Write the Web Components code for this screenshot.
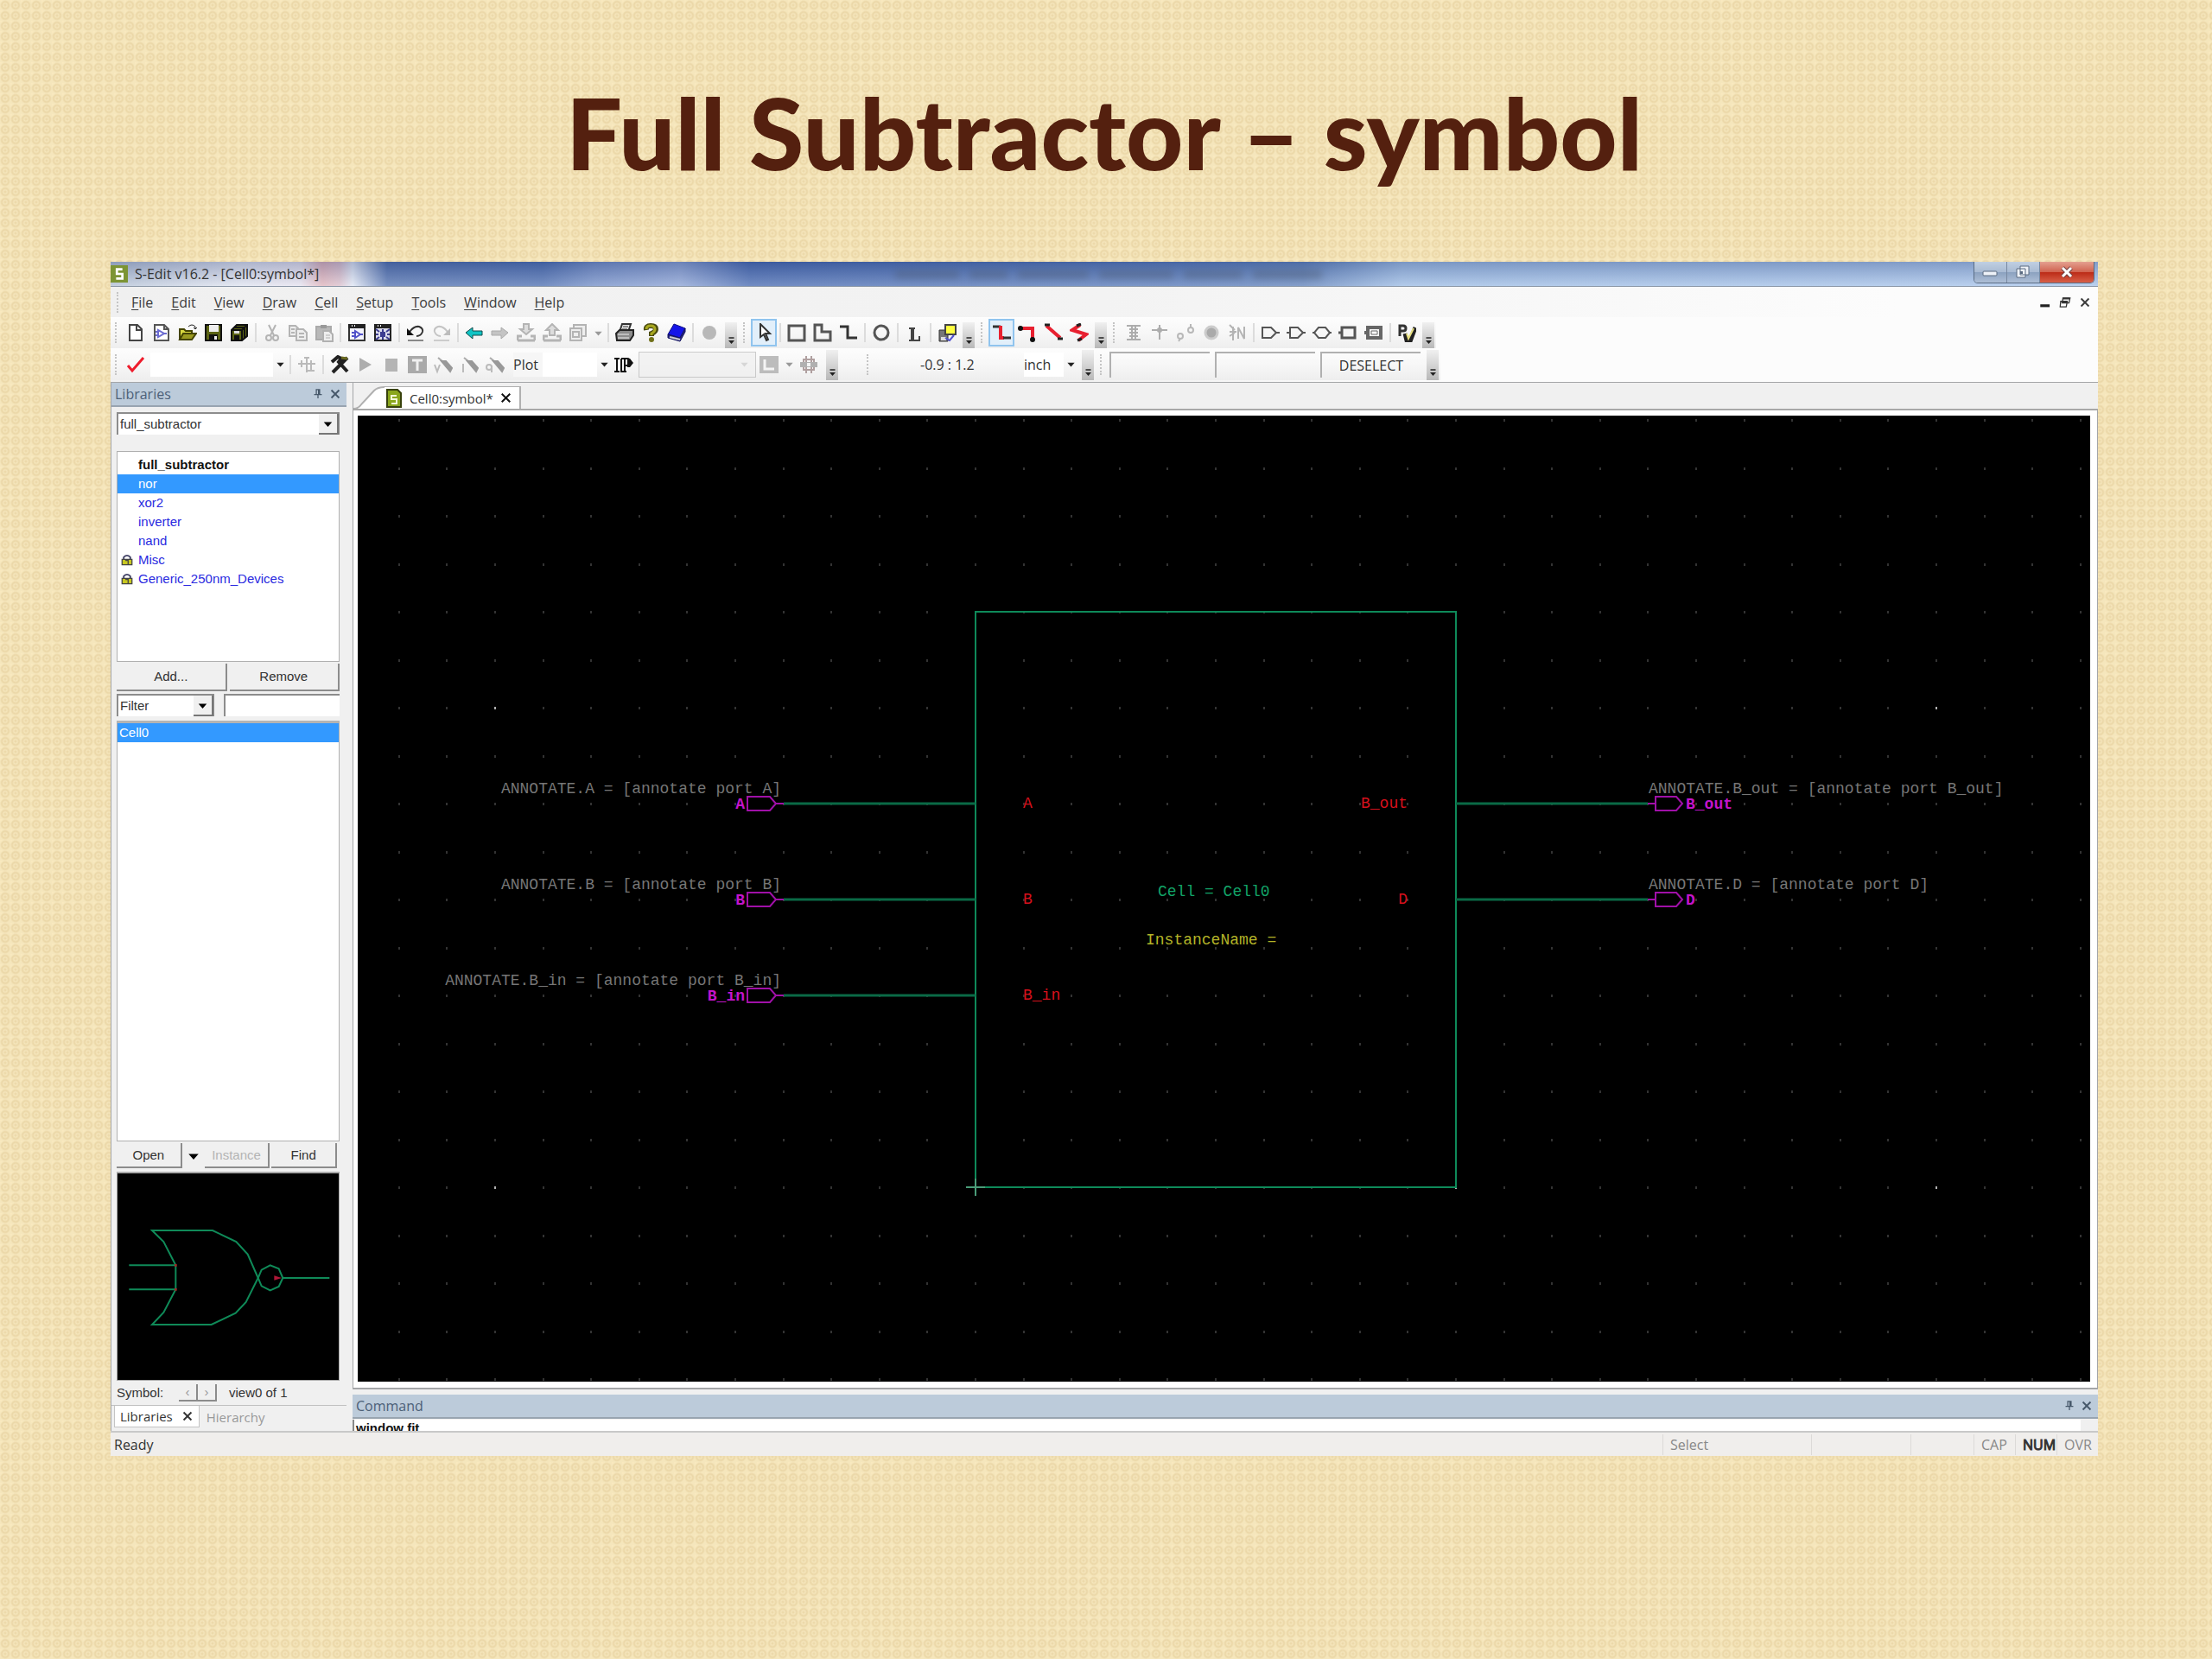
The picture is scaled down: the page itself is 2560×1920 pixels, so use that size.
<!DOCTYPE html>
<html lang="en">
<head>
<meta charset="utf-8">
<title>Full Subtractor – symbol</title>
<style>
  html { background: #f2e3b6; }
  body { margin: 0; font-family: "Open Sans", "Noto Sans", sans-serif; }
</style>
</head>
<body>
<slide-page>
  <span slot="title">Full Subtractor – symbol</span>
  <app-window></app-window>
</slide-page>

<script>
function define(tag, css, html, setup) {
  const template = document.createElement('template');
  template.innerHTML = `<style>*{box-sizing:border-box}${css}</style>${html}`;
  customElements.define(tag, class extends HTMLElement {
    constructor() {
      super();
      this.attachShadow({ mode: 'open' }).append(template.content.cloneNode(true));
    }
    connectedCallback() { if (setup) setup(this, this.shadowRoot); }
  });
}

const ICONS = {
  new: '<path d="M4 2h9l5 5v13H4z" fill="#fff" stroke="#444" stroke-width="2"/><path d="M12 2v6h6" fill="none" stroke="#444" stroke-width="2"/>',
  newcell: '<path d="M3 2h11l5 5v13H3z" fill="#fff" stroke="#555" stroke-width="2"/><path d="M14 2v5h5" fill="none" stroke="#555" stroke-width="2"/><path d="M7 8v8l7-4zM4 10h3M4 14h3M14 12h3" fill="none" stroke="#6a6ad0" stroke-width="2"/>',
  open: '<path d="M2 19V7h5l2 2h7v3" fill="#d8d840" stroke="#444400" stroke-width="2"/><path d="M2 19l4-7h15l-5 7z" fill="#9a9a20" stroke="#444400" stroke-width="2"/><path d="M12 4q4-4 8 0v3M18 5l2 2 2-2" fill="none" stroke="#222"/>',
  save: '<path d="M2 2h18v18H2z" fill="#5c6414" stroke="#111" stroke-width="2"/><path d="M6 2h11v8H6z" fill="#eee"/><path d="M6 13h10v7H6z" fill="#111"/><path d="M12 15h3v4h-3z" fill="#eee"/>',
  saveall: '<path d="M8 2h12v13l-6 5H2V8z" fill="#5c6414" stroke="#111" stroke-width="2"/><path d="M2 8h12v12M14 8l6-6M5 5h12v12" stroke="#111" stroke-width="2" fill="none"/><path d="M5 14h6v5H5z" fill="#111"/><path d="M5 9h6v3H5z" fill="#ddd"/>',
  cut: '<g fill="none" stroke="#b4b4b4" stroke-width="2"><path d="M7 2l6 12M15 2L9 14"/><circle cx="7" cy="17" r="3"/><circle cx="15" cy="17" r="3"/></g>',
  copy: '<g fill="#eee" stroke="#b4b4b4" stroke-width="2"><path d="M1 3h7l3 3v9H1z"/><path d="M9 7h8l4 4v9H9z"/><path d="M12 12h6M12 16h6M3 7h4M3 11h4"/></g>',
  paste: '<path d="M2 4h17v15H2z" fill="#b8b8b8" stroke="#aaa" stroke-width="2"/><path d="M7 2h7v4H7z" fill="#999"/><path d="M10 9h7l4 4v8H10z" fill="#eee" stroke="#b0b0b0" stroke-width="2"/><path d="M13 14h5M13 17h5" stroke="#b0b0b0"/>',
  view1: '<path d="M2 2h18v18H2z" fill="#f4f4fc" stroke="#333" stroke-width="2"/><path d="M1 1h20v5H1z" fill="#222"/><path d="M5 3h1M8 3h1" stroke="#fff" stroke-width="2"/><path d="M9 9l6 4-6 4zM5 11h4M5 15h4M15 13h3" fill="none" stroke="#5050c8" stroke-width="2"/>',
  view2: '<path d="M2 2h18v18H2z" fill="#dde" stroke="#222" stroke-width="2"/><path d="M1 1h20v5H1z" fill="#222"/><path d="M5 3h1M8 3h1" stroke="#fff" stroke-width="2"/><path d="M8 10h6v6H8z" fill="#3c3c90"/><path d="M3 7l4 3M19 7l-4 3M3 19l4-3M19 19l-4-3M11 7v3M11 16v3M3 13h3M16 13h3" stroke="#3c3c90" stroke-width="2"/>',
  undo: '<path d="M4 10Q9 3 15 4q5 2 4 6-2 5-7 5" fill="none" stroke="#333" stroke-width="2"/><path d="M1 6v8h8z" fill="#111"/><path d="M2 20h18" stroke="#888" stroke-width="2"/>',
  redo: '<path d="M18 10Q13 3 7 4q-5 2-4 6 2 5 7 5" fill="none" stroke="#c4c4c4" stroke-width="2"/><path d="M21 6v8h-8z" fill="#bcbcbc"/><path d="M2 20h18" stroke="#ccc" stroke-width="2"/>',
  back: '<path d="M1 11l8-6v4h11v5H9v4z" fill="#10c4c4" stroke="#124a4a" stroke-width="1"/>',
  fwd: '<path d="M20 11l-8-6v4H1v5h11v4z" fill="#c4c4c4" stroke="#aaa"/>',
  down: '<path d="M8 1h6v6h4l-7 6-7-6h4z" fill="#ddd" stroke="#b4b4b4" stroke-width="2"/><path d="M1 20v-5h5M21 20v-5h-5M1 20h20" fill="none" stroke="#b4b4b4" stroke-width="3"/>',
  up: '<path d="M8 14V8H4l7-7 7 7h-4v6z" fill="#ddd" stroke="#b4b4b4" stroke-width="2"/><path d="M1 20v-5h5M21 20v-5h-5M1 20h20" fill="none" stroke="#b4b4b4" stroke-width="3"/>',
  doc: '<g fill="#eee" stroke="#b4b4b4" stroke-width="2"><path d="M6 5V2h14v13h-4"/><path d="M2 6h13v14H2z"/><path d="M5 10h7v6H5z"/></g>',
  print: '<path d="M8 1h10l-3 9H5z" fill="#e4e4e4" stroke="#333" stroke-width="2"/><path d="M1 12l4-4h16v6l-4 6H2z" fill="#8c8c8c" stroke="#222" stroke-width="2"/><path d="M3 13h13M3 17h13" stroke="#eee" stroke-width="1"/><path d="M9 4h6M8 7h6" stroke="#333"/>',
  help: '<path d="M6 8Q5 3 11 3q6 0 6 4 0 3-5 5v3" fill="none" stroke="#4a4a10" stroke-width="6"/><path d="M6 7Q6 3 11 3q5 0 5 4 0 3-4 5v2" fill="none" stroke="#a8a820" stroke-width="3"/><circle cx="12" cy="19" r="3" fill="#70701a"/>',
  book: '<path d="M8 1l13 5-6 11-14-4z" fill="#1414e8" stroke="#101080"/><path d="M1 13v4l14 4 6-11V6l-6 11z" fill="#2a2a80" stroke="#111160"/><path d="M3 16l12 3" stroke="#ccc" stroke-width="2"/>',
  dot: '<circle cx="11" cy="11" r="8" fill="#b8b8b8"/>',
  arrow: '<path d="M7 1v15l4-3 3 7 2-1-3-7h5z" fill="#fff" stroke="#333" stroke-width="2"/>',
  rect: '<path d="M2 3h18v17H2z" fill="none" stroke="#555" stroke-width="3"/>',
  poly: '<path d="M2 2h8v8h10v10H2z" fill="none" stroke="#555" stroke-width="3"/>',
  wire: '<path d="M1 4h9v13h11" fill="none" stroke="#333" stroke-width="3"/>',
  circle: '<circle cx="11" cy="11" r="8" fill="none" stroke="#555" stroke-width="3"/>',
  ell: '<path d="M5 6h7M5 20h12v-5" fill="none" stroke="#444" stroke-width="2"/><path d="M9 6v14" stroke="#444" stroke-width="4"/>',
  cube: '<path d="M2 8h10v13H2z" fill="#777" stroke="#333"/><path d="M4 16h6v4H4z" fill="#ddd"/><path d="M9 2h12v11H9z" fill="#ffff40" stroke="#444" stroke-width="2"/><path d="M9 17l5 3 5-6" fill="none" stroke="#5050d0" stroke-width="2"/>',
  rwire: '<path d="M1 4h9" stroke="#333" stroke-width="3"/><path d="M10 3v14h4" fill="none" stroke="#e82030" stroke-width="4"/><path d="M13 17h9" stroke="#333" stroke-width="3"/>',
  rcorner: '<path d="M3 6h14v12" fill="none" stroke="#e82030" stroke-width="4"/><circle cx="3" cy="6" r="3" fill="#111"/><circle cx="17" cy="19" r="3" fill="#111"/>',
  rdiag: '<path d="M3 3l16 14" stroke="#e82030" stroke-width="4"/><path d="M1 2h6M16 18h6" stroke="#222" stroke-width="3"/>',
  rzig: '<path d="M12 2L3 8l16 5-9 7" fill="none" stroke="#e82030" stroke-width="4"/><path d="M8 3l5-2M9 20l5-2" stroke="#222" stroke-width="3"/>',
  beam: '<path d="M3 3h16M3 19h16M6 7h10M6 11h10M6 15h10M9 3v16M13 3v16" stroke="#adadad" stroke-width="2"/>',
  plus: '<path d="M2 8h18M11 2v17" stroke="#adadad" stroke-width="2"/><circle cx="11" cy="8" r="3" fill="#adadad"/>',
  nodes: '<g fill="none" stroke="#b8b8b8" stroke-width="2"><circle cx="5" cy="15" r="3"/><circle cx="17" cy="8" r="3"/><path d="M3 21l2-3M17 1v4"/></g>',
  ring: '<circle cx="11" cy="11" r="7" fill="#aaa" stroke="#ccc" stroke-width="3"/>',
  net: '<path d="M12 18V5l7 13V4M2 2l6 6M2 10h8M6 4v16M2 15l6-4" fill="none" stroke="#b4b4b4" stroke-width="2"/>',
  pin: '<path d="M2 5h10l6 6-6 6H2zM18 11h4" fill="none" stroke="#555" stroke-width="2"/>',
  pout: '<path d="M4 5h9l6 6-6 6H4zM0 11h4M19 11h3" fill="none" stroke="#555" stroke-width="2"/>',
  pbi: '<path d="M7 5h8l5 6-5 6H7l-5-6zM0 11h2M20 11h2" fill="none" stroke="#555" stroke-width="2"/>',
  pbox: '<path d="M4 5h15v12H4zM0 11h4" fill="none" stroke="#555" stroke-width="3"/>',
  pbox2: '<path d="M4 5h15v12H4zM0 11h4" fill="none" stroke="#666" stroke-width="4"/><path d="M8 9h7v4H8z" fill="#fff" stroke="#666" stroke-width="1"/>',
  pen: '<path d="M3 15V3h4q3 0 3 3t-3 3H3" fill="none" stroke="#333" stroke-width="3"/><path d="M9 12l2 8 4 1 6-16" fill="none" stroke="#222" stroke-width="5"/><path d="M11 12l2 6 6-12" fill="none" stroke="#e8e080" stroke-width="2"/>',
  check: '<path d="M2 12l5 6L20 3" fill="none" stroke="#ee1c2c" stroke-width="3"/>',
  tree: '<path d="M1 10h20M11 2v18M5 6v8M16 6v12M8 3h6M12 18h8" fill="none" stroke="#bababa" stroke-width="2"/>',
  hammer: '<path d="M2 8l7-6 4 2-3 4 10 11M20 3l-3 3-3-1M17 6L3 20" fill="none" stroke="#222" stroke-width="4"/><path d="M13 3l7 1" stroke="#6a6a20" stroke-width="3"/>',
  play: '<path d="M4 3l14 8-14 8z" fill="#adadad"/>',
  stop: '<path d="M4 4h14v15H4z" fill="#b4b4b4"/>',
  tee: '<path d="M0 1h22v20H0z" fill="#aaa"/><path d="M5 6h12M11 6v12" stroke="#f0f0f0" stroke-width="3"/>',
  vprobe: '<path d="M5 3l5 4" stroke="#aaa" stroke-width="2"/><path d="M9 7l5 0 7 8-2 4z" fill="#999" stroke="#999" stroke-width="2"/><path d="M1 11l3 8 3-8" fill="none" stroke="#bbb" stroke-width="2"/>',
  iprobe: '<path d="M5 3l5 4" stroke="#aaa" stroke-width="2"/><path d="M9 7l5 0 7 8-2 4z" fill="#999" stroke="#999" stroke-width="2"/><path d="M4 10v10" fill="none" stroke="#bbb" stroke-width="2"/>',
  qprobe: '<path d="M5 3l5 4" stroke="#aaa" stroke-width="2"/><path d="M9 7l5 0 7 8-2 4z" fill="#999" stroke="#999" stroke-width="2"/><circle cx="4" cy="14" r="3" fill="none" stroke="#bbb" stroke-width="2"/><path d="M7 12v8" stroke="#bbb" stroke-width="2"/>',
  ip: '<path d="M0 4h6M0 19h6M3 4v15M8 4v15M12 4v15M7 19h7M8 4h7q3 0 3 4t-4 4h-2" fill="none" stroke="#111" stroke-width="2"/><path d="M15 4h3l4 5-4 5h-3z" fill="#111"/>',
  layer: '<path d="M0 1h22v20H0z" fill="#bcbcbc"/><path d="M6 5v11h11" fill="none" stroke="#f4f4f4" stroke-width="3"/>',
  chip: '<path d="M5 5h12v12H5zM8 1v20M14 1v20" fill="none" stroke="#b0a0a0" stroke-width="2"/><path d="M1 8h20v6H1z" fill="#b0b0b0"/><path d="M9 9h4v4H9z" fill="#f4f4f4"/>',
  pushpin: '<path d="M7 3h8M8 3v9M14 3v9M12 3v9M4 12h14M11 12v7" fill="none" stroke="#46586a" stroke-width="2"/>',
  x: '<path d="M4 4l14 14M18 4L4 18" stroke="currentColor" stroke-width="3"/>',
  tabdoc: '<path d="M3 1h12l4 4v16H3z" fill="#8aa61c" stroke="#38420c" stroke-width="2"/><path d="M14 8H8v4h6v5H8" fill="none" stroke="#f4f8d8" stroke-width="2"/>',
  logo: '<path d="M0 0h22v22H0z" fill="#7c9434"/><path d="M15 5H8v6h7v6H7" fill="none" stroke="#fff" stroke-width="3"/>',
  lock: '<path d="M5 10V6q6-6 12 0v4" fill="none" stroke="#46466a" stroke-width="3"/><path d="M2 10h18v10H2z" fill="#c8c820" stroke="#444" stroke-width="2"/><path d="M8 12h5v7" fill="none" stroke="#444" stroke-width="2"/>',
  caret: '<path d="M4 8h14l-7 8z" fill="currentColor"/>',
  over: '<path d="M5 4h12" stroke="#222" stroke-width="3"/><path d="M4 10h14l-7 8z" fill="#222"/>',
  min: '<path d="M2 17h17" stroke="#222" stroke-width="5"/>',
  rest: '<path d="M7 3h13l-2 9H6zM3 9h12l-2 10H2z" fill="#fff" stroke="#333" stroke-width="2"/><path d="M7 4h12M4 10h11" stroke="#333" stroke-width="3"/>'
};

customElements.define('ui-icon', class extends HTMLElement {
  connectedCallback() {
    const root = this.shadowRoot || this.attachShadow({ mode: 'open' });
    root.innerHTML = `<style>:host{display:block;flex:none;width:var(--size,22px);height:var(--size,22px)}svg{display:block;width:100%;height:100%}</style>
      <svg viewBox="0 0 22 22" aria-hidden="true">${ICONS[this.getAttribute('name')]}</svg>`;
  }
});

define('slide-page', `
  :host { display: flex; flex-direction: column; min-height: 100vh; padding: 82px 132px 0 128px;
    background:
      radial-gradient(circle at 6px 6px, rgba(214,184,124,.28) 0 1px, transparent 2px, rgba(214,184,124,.34) 4px, transparent 6px) 0 0 / 12px 12px,
      radial-gradient(circle at 0 0, rgba(255,238,196,.6) 0, transparent 4px) 0 0 / 12px 12px,
      #f5e6bc; }
  h1 { margin: 0 0 81px; font: 900 115px/140px Lato, sans-serif; color: #54200f; text-align: center; }
`, `<h1><slot name="title"></slot></h1><slot></slot>`);

define('app-window', `
  :host { display: flex; flex-direction: column; background: #f0f0f0; color: #333; font-size: 16px; line-height: 22px; }
  .work { display: flex; gap: 7px; border-top: 1px solid #a4a6a8; }
  side-panel { flex: none; width: 273px; }
  .main { flex: 1; min-width: 0; display: flex; flex-direction: column; }
`, `
  <title-bar></title-bar>
  <menu-bar></menu-bar>
  <tool-rows></tool-rows>
  <div class="work">
    <side-panel></side-panel>
    <div class="main"><doc-tabs></doc-tabs><schematic-view></schematic-view><command-panel></command-panel></div>
  </div>
  <status-bar></status-bar>
`);

define('title-bar', `
  :host { display: flex; align-items: stretch; height: 29px; overflow: hidden; border-bottom: 1px solid #8c98a8;
    background:
      linear-gradient(rgba(20,40,100,.25), rgba(255,255,255,.22)),
      linear-gradient(90deg, #b4c2d6 0, #dfe3ef 150px, #e6e2ee 220px, #e0b4bc 245px, #dcc0cc 265px, #dfe6f4 280px, #5473b0 320px, #5071b2 500px, #7590c8 560px, #8ba2d4 660px, #4a6cb2 740px, #5a7cba 55%, #6284bc 60%, #9dbce4 65%, #a8c4ea 100%); }
  .name { display: flex; align-items: center; gap: 8px; color: #333; }
  ui-icon { --size: 20px; }
  .ghost { flex: 1; display: flex; align-items: center; justify-content: center; gap: 12px; padding-right: 88px; filter: blur(4px); opacity: .45; }
  .ghost i { height: 9px; background: #4e5c74; }
  .ghost i:nth-child(1) { width: 74px } .ghost i:nth-child(2) { width: 44px } .ghost i:nth-child(3) { width: 82px }
  .ghost i:nth-child(4) { width: 86px } .ghost i:nth-child(5) { width: 68px } .ghost i:nth-child(6) { width: 80px }
  .ctl { display: flex; width: 140px; height: 25px; margin-right: 4px; border: 1px solid #5a6c84; border-top: 0; border-radius: 0 0 5px 5px; overflow: hidden; }
  .ctl button { flex: 1; padding: 0; border: 0; border-right: 1px solid #7888a0; display: grid; place-items: center;
    background: linear-gradient(#c0cfe2, #a8bad2 50%, #8ca2c0 52%, #aebfd6); }
  .ctl button:last-child { flex: 1.7; border: 0; background: linear-gradient(#e4a090, #d06450 48%, #bc2c18 52%, #d86048); }
  svg { width: 22px; height: 20px; }
`, `
  <div class="name"><ui-icon name="logo"></ui-icon><span>S-Edit v16.2 - [Cell0:symbol*]</span></div>
  <div class="ghost"><i></i><i></i><i></i><i></i><i></i><i></i></div>
  <div class="ctl">
    <button aria-label="Minimize"><svg viewBox="0 0 22 20"><rect x="3" y="9" width="16" height="5" rx="1" fill="#eef2f8" stroke="#5a6a80"/></svg></button>
    <button aria-label="Restore"><svg viewBox="0 0 22 20"><path d="M8 3h10v10H8zM4 6h10v10H4z" fill="#eef2f8" stroke="#5a6a80"/><path d="M8 9h3v3H8z" fill="#5a6a80"/></svg></button>
    <button aria-label="Close"><svg viewBox="0 0 22 20"><path d="M6 5l10 10M16 5L6 15" stroke="#704040" stroke-width="5"/><path d="M6 5l10 10M16 5L6 15" stroke="#fff" stroke-width="3"/></svg></button>
  </div>
`);

define('tool-grip', `
  :host { display: block; flex: none; width: 4px; height: 24px; margin: 0 5px; border-left: 2px dotted #c4c4c4; }
`, ``);

define('menu-bar', `
  :host { display: flex; align-items: center; height: 35px; padding-left: 2px; background: linear-gradient(90deg, #f0f0f0, #f3f3f3 50%, #fcfcfc 90%); }
  nav { display: flex; gap: 21px; padding-left: 8px; flex: 1; }
  button { all: unset; color: #3c3c3c; }
  u { text-underline-offset: 2px; }
  .mdi { display: flex; gap: 9px; padding-right: 8px; --size: 14px; color: #111; }
`, `
  <tool-grip></tool-grip>
  <nav>
    <button><u>F</u>ile</button><button><u>E</u>dit</button><button><u>V</u>iew</button><button><u>D</u>raw</button><button><u>C</u>ell</button>
    <button><u>S</u>etup</button><button><u>T</u>ools</button><button><u>W</u>indow</button><button><u>H</u>elp</button>
  </nav>
  <div class="mdi">
    <button aria-label="Minimize document"><ui-icon name="min"></ui-icon></button>
    <button aria-label="Restore document"><ui-icon name="rest"></ui-icon></button>
    <button aria-label="Close document"><ui-icon name="x"></ui-icon></button>
  </div>
`);

const button = name => `<button aria-label="${name}"><ui-icon name="${name}"></ui-icon></button>`;
const MORE = '<button class="over" aria-label="More"><ui-icon name="over"></ui-icon></button>';
const firstRow = 'grip new newcell open save saveall | cut copy paste | view1 view2 | undo redo | back fwd down up doc v | print help book | dot more grip *arrow | rect poly wire | circle | ell | cube more grip *rwire rcorner rdiag rzig more grip beam plus nodes ring net | pin pout pbi pbox pbox2 | pen more'
  .split(' ').map(t =>
    t === 'grip' ? '<tool-grip></tool-grip>' :
    t === '|' ? '<i class="sep"></i>' :
    t === 'more' ? MORE :
    t === 'v' ? '<button class="drop" aria-label="Choose"><ui-icon name="caret"></ui-icon></button>' :
    t[0] === '*' ? button(t.slice(1)).replace('<button', '<button class="on"') : button(t)).join('');

define('tool-rows', `
  :host { display: block; padding-bottom: 2px; background: linear-gradient(90deg, transparent 50%, #fcfcfc 66%), #f2f2f2; }
  .row { display: flex; align-items: center; height: 36px; }
  .row > div { display: flex; align-items: center; height: 100%; background: linear-gradient(#fdfdfd, #f7f7f7 50%, #eeeeee); }
  .second { height: 37px; }
  button { flex: none; width: 30px; height: 32px; padding: 0; border: 0; background: none; display: grid; place-items: center; color: #222; }
  .on { background: #e2effa; border: 2px solid #90c4ee; }
  .sep { width: 2px; height: 22px; margin: 0 3px; background: #dcdcdc; }
  .drop { width: 16px; --size: 13px; color: #999; }
  .dark { color: #222; }
  .over { align-self: end; width: 14px; height: 30px; margin: 0 2px 0 3px; --size: 11px; padding-top: 12px; background: linear-gradient(#f0f0f0, #b8b8b8); }
  .second .over { height: 35px; padding-top: 18px; margin-left: 5px; }
  input, select { appearance: none; border: 0; margin: 0; padding: 0; font: inherit; color: #333; background: #fff; height: 28px; border-radius: 0; }
  .find { width: 142px; margin-left: 2px; }
  .plot { width: 97px; background: linear-gradient(90deg, #f6f6f6 34px, #fff 34px); margin-left: 6px; }
  .off { width: 136px; height: 30px; margin-left: 2px; border: 1px solid #b8b8b8; background: #f0f0f0; }
  .combo { display: flex; align-items: center; }
  .combo ui-icon { margin-left: -20px; --size: 13px; color: #999; pointer-events: none; margin-right: 7px; }
  .coord { width: 173px; padding-left: 53px; }
  .unit { width: 46px; }
  .cells { display: flex; gap: 6px; padding: 0 2px; }
  .cells > * { width: 116px; height: 30px; border: 0 solid #b0b0b0; border-width: 2px 0 0 2px; background: none; font: inherit; color: #333; text-align: center; }
  .gap { width: 26px; }
`, `
  <div class="row"><div>${firstRow}</div></div>
  <div class="row second"><div>
    <tool-grip></tool-grip>${button('check')}
    <input class="find" aria-label="Command"><button class="drop dark" aria-label="History"><ui-icon name="caret"></ui-icon></button>
    <i class="sep"></i>${button('tree')}<i class="sep"></i>
    ${['hammer', 'play', 'stop', 'tee', 'vprobe', 'iprobe', 'qprobe'].map(button).join('')}
    <select class="plot" aria-label="Probe mode"><option>Plot</option></select>
    <button class="drop dark" aria-label="Plot modes"><ui-icon name="caret"></ui-icon></button>
    ${button('ip')}
    <span class="combo"><select class="off" aria-label="Plot target" disabled></select><ui-icon name="caret"></ui-icon></span>
    ${button('layer')}<button class="drop" aria-label="Layers"><ui-icon name="caret"></ui-icon></button>${button('chip')}
    ${MORE}<span class="gap"></span><tool-grip></tool-grip>
    <span class="coord">-0.9 : 1.2</span>
    <select class="unit" aria-label="Unit"><option>inch</option></select>
    <button class="drop dark" aria-label="Units"><ui-icon name="caret"></ui-icon></button>
    ${MORE}<tool-grip></tool-grip>
    <span class="cells"><input aria-label="Left button"><input aria-label="Middle button"><button>DESELECT</button></span>
    ${MORE}
  </div></div>
`);

define('panel-header', `
  :host { display: flex; align-items: center; height: 28px; padding: 0 6px 0 4px; gap: 6px; flex: none;
    background: #bccbda; border-bottom: 2px solid #98a4b0; color: #4c6078; }
  span { flex: 1; }
  button { all: unset; color: #46586a; --size: 14px; }
`, `
  <span><slot></slot></span>
  <button aria-label="Pin"><ui-icon name="pushpin"></ui-icon></button>
  <button aria-label="Close"><ui-icon name="x"></ui-icon></button>
`);

define('side-panel', `
  :host { display: flex; flex-direction: column; border-left: 1px solid #a4a6a8; font: 15px/22px "Liberation Sans", Arial, sans-serif; }
  panel-header { font: 16px/22px "Open Sans", sans-serif; }
  .body { flex: 1; display: flex; flex-direction: column; padding: 6px 8px 0 6px; }
  .combo { display: flex; border: 2px solid #8c8c8c; border-width: 2px 1px 0 2px; background: #fff; height: 26px; }
  select, input { appearance: none; font: inherit; color: #333; border: 0; margin: 0; padding: 0 2px; width: 100%; background: none; border-radius: 0; }
  .combo b { flex: none; display: grid; place-items: center; width: 23px; border: 1px solid #777; border-width: 0 2px 2px 0; background: #f0f0f0; --size: 15px; color: #000; }
  ul { list-style: none; margin: 0; padding: 4px 0 0; background: #fff; border: 1px solid #b0b0b0; }
  .libs { margin-top: 19px; height: 244px; }
  li { display: flex; align-items: center; gap: 6px; height: 22px; padding-left: 4px; color: #2a2ae0; }
  li::before { content: ""; width: 14px; }
  li:has(ui-icon)::before { display: none; }
  li ui-icon { --size: 14px; }
  li.own { color: #111; font-weight: 700; }
  li.sel { background: #3399ff; color: #fff; }
  .cells { flex: 1; border-top: 3px solid #b4b4b4; padding: 0; }
  .cells li { padding-left: 2px; }
  .cells li::before { display: none; }
  .pair { display: flex; gap: 3px; padding-top: 2px; height: 37px; }
  .pair button { flex: 1; height: 32px; }
  button { font: inherit; color: #333; background: #f0f0f0; border: 0 solid #8c8c8c; border-width: 0 2px 2px 0; padding: 0; border-radius: 0; }
  .filter { display: flex; gap: 11px; height: 31px; }
  .filter .combo { width: 113px; }
  .filter input { flex: 1; min-width: 0; height: 26px; border: 1px solid #8c8c8c; border-width: 2px 0 0 2px; background: #fff; }
  .acts { display: flex; height: 35px; padding: 2px 3px 4px 0; gap: 2px; }
  .acts button { flex: 1; }
  .acts .pop { flex: none; width: 22px; border: 0; --size: 18px; color: #000; display: grid; place-items: center; }
  .acts button:disabled { color: #b4b4b4; }
  symbol-preview { border: 1px solid #aaa; border-width: 2px 1px 1px; }
  .view { display: flex; align-items: center; height: 28px; }
  .view span { width: 72px; }
  .view button { width: 22px; height: 20px; line-height: 16px; color: #999; }
  .view output { padding-left: 14px; }
  .tabs { display: flex; align-items: center; gap: 8px; height: 30px; padding-bottom: 4px; font: 15px/22px "Open Sans", sans-serif; border-top: 1px solid #c0c0c0; color: #999; }
  .tabs a { color: inherit; text-decoration: none; display: flex; gap: 10px; align-items: center; --size: 14px; height: 25px; }
  .tabs .cur { background: #fff; color: #333; margin-left: 3px; padding: 0 6px; border: 1px solid #c4c4c4; border-top: 0; }
`, `
  <panel-header>Libraries</panel-header>
  <div class="body">
    <div class="combo"><select aria-label="Design"><option>full_subtractor</option></select><b><ui-icon name="caret"></ui-icon></b></div>
    <ul class="libs">
      <li class="own">full_subtractor</li><li class="sel">nor</li><li>xor2</li><li>inverter</li><li>nand</li>
      <li><ui-icon name="lock"></ui-icon>Misc</li><li><ui-icon name="lock"></ui-icon>Generic_250nm_Devices</li>
    </ul>
    <div class="pair"><button>Add...</button><button>Remove</button></div>
    <div class="filter">
      <div class="combo"><select aria-label="Filter mode"><option>Filter</option></select><b><ui-icon name="caret"></ui-icon></b></div>
      <input aria-label="Filter text">
    </div>
    <ul class="cells"><li class="sel">Cell0</li></ul>
    <div class="acts"><button>Open</button><button class="pop" aria-label="Open options"><ui-icon name="caret"></ui-icon></button><button disabled>Instance</button><button>Find</button></div>
    <symbol-preview></symbol-preview>
    <div class="view"><span>Symbol:</span><button aria-label="Previous view">‹</button><button aria-label="Next view">›</button><output>view0 of 1</output></div>
  </div>
  <div class="tabs"><a class="cur" href="#libraries">Libraries<ui-icon name="x"></ui-icon></a><a href="#hierarchy">Hierarchy</a></div>
`);

define('symbol-preview', `
  :host { display: block; background: #000; }
  svg { display: block; width: 100%; }
`, `
  <svg viewBox="48 171 768 717" role="img" aria-label="NOR gate">
    <g fill="none" stroke="#0f8a58" stroke-width="6">
      <path d="M168 369H378L460 408L500 452L536 534L494 618L458 656L374 696H168L208 654L250 574V490L208 408Z"/>
      <path d="M88 490H250M88 574H250M622 534H784"/>
      <path d="M536 534L548 506L578 490L608 502L622 534L608 564L578 577L548 562Z"/>
    </g>
    <path d="M592 526L618 534L592 542Z" fill="#b01838"/>
    <path d="M246 486h8v8h-8zM246 570h8v8h-8z" fill="#a02828"/>
  </svg>
`);

define('doc-tabs', `
  :host { display: flex; height: 32px; border-left: 1px solid #a4a6a8; border-bottom: 2px solid #a8a8a8; background: #f0f0f0; }
  svg { display: block; flex: none; width: 36px; height: 26px; margin-top: 4px; }
  a { display: flex; align-items: center; gap: 7px; height: 26px; margin-top: 4px; padding-right: 8px; background: #fff; border: 1px solid #b0b0b0; border-width: 1px 2px 0 0; color: #333; text-decoration: none; font-size: 15px; }
  ui-icon.x { --size: 15px; color: #111; }
`, `
  <svg viewBox="0 0 36 26"><path d="M0 26Q6 26 10 20L24 5Q28 0 36 0V26z" fill="#fff"/><path d="M0 26Q6 26 10 20L24 5Q28 1 36 1" fill="none" stroke="#b0b0b0" stroke-width="2"/></svg>
  <a href="#cell0"><ui-icon name="tabdoc"></ui-icon>Cell0:symbol*<ui-icon class="x" name="x"></ui-icon></a>
`);

/* Schematic coordinates are measured from the cell origin; one grid step is 55.6 by 55.5 units. */
function drawSchematic() {
  const SX = 556 / 10, SY = 111 / 2;
  let dots = '';
  for (let i = -12; i <= 23; i++) for (let j = -16; j <= 4; j++) {
    const major = i % 10 === 0 && j % 10 === 0;
    dots += `<rect x="${Math.round(i * SX) - 1}" y="${Math.round(j * SY) - 1}" width="2" height="3" fill="${major ? '#b0b0b0' : '#333'}"/>`;
  }
  const inputs = [['A', -444], ['B', -333], ['B_in', -222]].map(([n, y]) => `
    <path class="g" d="M-222 ${y}H0"/>
    <path class="p" d="M-264 ${y - 8}h26l7 8l-7 8h-26zM-231 ${y}h9"/>
    <text class="note" text-anchor="end" x="-225" y="${y - 12}">ANNOTATE.${n} = [annotate port ${n}]</text>
    <text class="port" text-anchor="end" x="-267" y="${y + 6}">${n}</text>
    <text class="pin" x="55" y="${y + 5}">${n}</text>`).join('');
  const outputs = [['B_out', -444], ['D', -333]].map(([n, y]) => `
    <path class="g" d="M556 ${y}H778"/>
    <path class="p" d="M787 ${y - 8}h24l7 8l-7 8h-24zM778 ${y}h9"/>
    <text class="note" x="779" y="${y - 12}">ANNOTATE.${n} = [annotate port ${n}]</text>
    <text class="port" x="822" y="${y + 6}">${n}</text>
    <text class="pin" text-anchor="end" x="500" y="${y + 5}">${n}</text>`).join('');
  return `<svg viewBox="0 0 2005 1118" role="img" aria-label="Full subtractor symbol"><g transform="translate(715 893)">
    ${dots}
    <rect class="g box" x="0" y="-666" width="556" height="666"/>
    <path d="M-11 0H11M0 -10V10" stroke="#4a9c78" stroke-width="2"/>
    ${inputs}${outputs}
    <text x="211" y="-337" fill="#12a468">Cell = Cell0</text>
    <text x="197" y="-281" fill="#b4b428">InstanceName =</text>
  </g></svg>`;
}

define('schematic-view', `
  :host { display: block; padding: 6px 8px 7px 5px; background: #fff; border: 1px solid #a4a6a8; border-top: 0; border-bottom-width: 2px; }
  svg { display: block; width: 100%; background: #000; }
  text { font: 18px "Liberation Mono", monospace; }
  .g { fill: none; stroke: #0a6a46; stroke-width: 3; }
  .box { stroke: #0e8a5a; stroke-width: 2; }
  .p { fill: none; stroke: #a010a8; stroke-width: 2; }
  .note { fill: #767676; }
  .port { fill: #c414cc; font-weight: 700; }
  .pin { fill: #d8101c; }
`, drawSchematic());

define('command-panel', `
  :host { display: block; margin-top: 6px; }
  .out { height: 13px; overflow: hidden; margin: 1px 20px 0 0; background: #fff; border-left: 2px solid #888; padding-left: 2px;
    font: 700 15px/20px "Liberation Sans", sans-serif; color: #111; }
`, `<panel-header>Command</panel-header><div class="out">window fit</div>`);

define('status-bar', `
  :host { display: flex; align-items: center; height: 29px; border-top: 2px solid #c8c8c8; background: #f0eeec; padding-left: 4px; color: #333; }
  span { box-sizing: border-box; height: 24px; line-height: 24px; color: #888; }
  .ready { flex: 1; color: #333; }
  .cell { border-left: 1px solid #dcdad8; padding-left: 8px; }
  .w1 { width: 172px } .w2 { width: 115px } .w3 { width: 73px } .w4 { width: 48px }
  .on { color: #333; -webkit-text-stroke: 1px #333; }
`, `
  <span class="ready">Ready</span><span class="cell w1">Select</span><span class="cell w2"></span><span class="cell w3"></span>
  <span class="cell w4">CAP</span><span class="cell w4 on">NUM</span><span class="cell w4">OVR</span>
`);
</script>
</body>
</html>
